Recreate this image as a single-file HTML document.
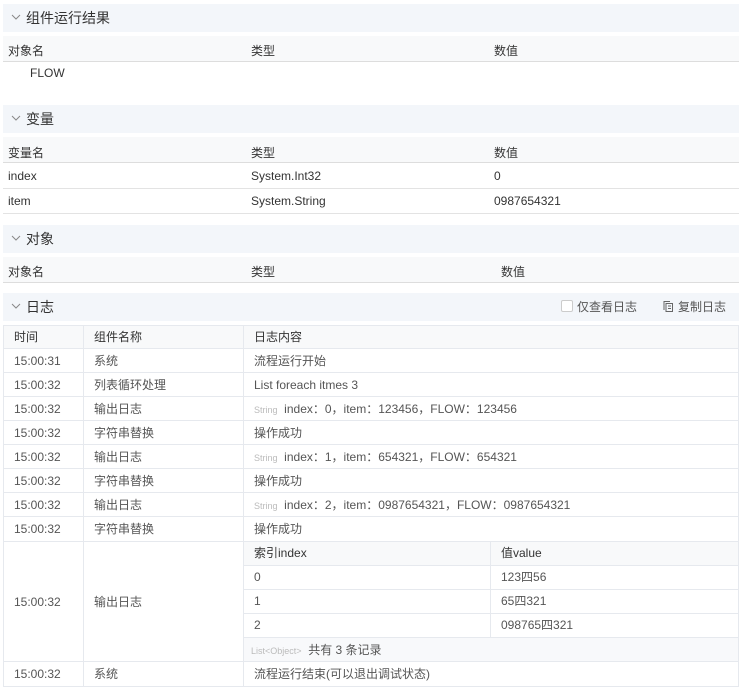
<!DOCTYPE html><html><head><meta charset="utf-8"><style>
*{margin:0;padding:0;box-sizing:border-box}
body{width:743px;height:692px;background:#fff;font-family:"Liberation Sans","Noto Sans CJK SC",sans-serif;font-size:12px;color:#333;position:relative;overflow:hidden}
.a{position:absolute;white-space:nowrap}
.hd{position:absolute;left:3px;width:736px;height:28px;background:#f3f6fa;font-size:14px;line-height:28px;padding-left:23px}
.hd svg{position:absolute;left:8px;top:10px}
.th{position:absolute;left:3px;width:736px;height:26px;background:#f8f9fa;border-bottom:1px solid #ddd}
.row{position:absolute;left:3px;width:736px;border-bottom:1px solid #e3e3e3}
.t{position:absolute;color:#555;line-height:24px}
.g{color:#555}
.s{font-size:9px;color:#bbb}
</style></head><body>
<div class="hd" style="top:4px"><svg width="10" height="7"><path d="M1 1l4 4 4-4" stroke="#888" fill="none"/></svg>组件运行结果</div>
<div class="th" style="top:36px"></div>
<div class="a" style="left:8px;top:42px">对象名</div><div class="a" style="left:251px;top:42px">类型</div><div class="a" style="left:494px;top:42px">数值</div>
<div class="a" style="left:30px;top:66px">FLOW</div>

<div class="hd" style="top:105px"><svg width="10" height="7"><path d="M1 1l4 4 4-4" stroke="#888" fill="none"/></svg>变量</div>
<div class="th" style="top:137px"></div>
<div class="a" style="left:8px;top:144px">变量名</div><div class="a" style="left:251px;top:144px">类型</div><div class="a" style="left:494px;top:144px">数值</div>
<div class="row" style="top:163px;height:26px"></div><div class="row" style="top:188px;height:26px"></div>
<div class="a" style="left:8px;top:169px">index</div><div class="a" style="left:251px;top:169px">System.Int32</div><div class="a" style="left:494px;top:169px">0</div>
<div class="a" style="left:8px;top:194px">item</div><div class="a" style="left:251px;top:194px">System.String</div><div class="a" style="left:494px;top:194px">0987654321</div>

<div class="hd" style="top:225px"><svg width="10" height="7"><path d="M1 1l4 4 4-4" stroke="#888" fill="none"/></svg>对象</div>
<div class="th" style="top:257px"></div>
<div class="a" style="left:8px;top:263px">对象名</div><div class="a" style="left:251px;top:263px">类型</div><div class="a" style="left:501px;top:263px">数值</div>

<div class="hd" style="top:293px"><svg width="10" height="7"><path d="M1 1l4 4 4-4" stroke="#888" fill="none"/></svg>日志
<span class="a" style="left:558px;top:7px;width:12px;height:12px;border:1px solid #ccc;border-radius:2px;background:#fff"></span>
<span class="a g" style="left:574px;top:0;font-size:12px">仅查看日志</span>
<svg class="a" style="left:660px;top:8px" width="11" height="12"><path d="M3 2.5h6.5v8H3zM1 9V.5h6" stroke="#666" fill="none"/><path d="M5 5h3M5 7.5h3" stroke="#666"/></svg>
<span class="a g" style="left:675px;top:0;font-size:12px">复制日志</span></div>

<div class="a" style="left:3px;top:325px;width:736px;height:362px;border:1px solid #e6e9ee"></div>
<div class="a" style="left:4px;top:326px;width:734px;height:23px;background:#f8f9fa"></div>
<div class="a" style="left:83px;top:325px;width:1px;height:362px;background:#e6e9ee"></div>
<div class="a" style="left:243px;top:325px;width:1px;height:362px;background:#e6e9ee"></div>
<div class="t" style="left:14px;top:325px;color:#333">时间</div><div class="t" style="left:94px;top:325px;color:#333">组件名称</div><div class="t" style="left:254px;top:325px;color:#333">日志内容</div>
<div id="rows"></div>
<script>
var r=[["15:00:31","系统","流程运行开始"],["15:00:32","列表循环处理","List foreach itmes 3"],["15:00:32","输出日志","<span class='s'>String</span>&nbsp; index：0，item：123456，FLOW：123456"],["15:00:32","字符串替换","操作成功"],["15:00:32","输出日志","<span class='s'>String</span>&nbsp; index：1，item：654321，FLOW：654321"],["15:00:32","字符串替换","操作成功"],["15:00:32","输出日志","<span class='s'>String</span>&nbsp; index：2，item：0987654321，FLOW：0987654321"],["15:00:32","字符串替换","操作成功"]];
var h="";for(var i=0;i<r.length;i++){var y=349+i*24;h+="<div class='a' style='left:4px;top:"+(y-1)+"px;width:734px;height:1px;background:#e6e9ee'></div><div class='t' style='left:14px;top:"+y+"px'>"+r[i][0]+"</div><div class='t' style='left:94px;top:"+y+"px'>"+r[i][1]+"</div><div class='t' style='left:254px;top:"+y+"px'>"+r[i][2]+"</div>";}
document.getElementById("rows").innerHTML=h;
</script>
<div class="a" style="left:4px;top:541px;width:734px;height:1px;background:#e6e9ee"></div>
<div class="a" style="left:244px;top:542px;width:494px;height:23px;background:#f8f9fa"></div>
<div class="a" style="left:244px;top:565px;width:494px;height:1px;background:#e6e9ee"></div>
<div class="a" style="left:244px;top:589px;width:494px;height:1px;background:#e6e9ee"></div>
<div class="a" style="left:244px;top:613px;width:494px;height:1px;background:#e6e9ee"></div>
<div class="a" style="left:244px;top:637px;width:494px;height:1px;background:#e6e9ee"></div>
<div class="a" style="left:244px;top:638px;width:494px;height:23px;background:#f8f9fb"></div>
<div class="a" style="left:490px;top:541px;width:1px;height:96px;background:#e6e9ee"></div>
<div class="t" style="left:254px;top:541px;color:#333">索引index</div><div class="t" style="left:501px;top:541px;color:#333">值value</div>
<div class="t" style="left:254px;top:565px">0</div><div class="t" style="left:501px;top:565px">123四56</div>
<div class="t" style="left:254px;top:589px">1</div><div class="t" style="left:501px;top:589px">65四321</div>
<div class="t" style="left:254px;top:613px">2</div><div class="t" style="left:501px;top:613px">098765四321</div>
<div class="t" style="left:251px;top:638px"><span class="s">List&lt;Object&gt;</span>&nbsp; 共有 3 条记录</div>
<div class="t" style="left:14px;top:590px">15:00:32</div><div class="t" style="left:94px;top:590px">输出日志</div>
<div class="a" style="left:4px;top:661px;width:734px;height:1px;background:#e6e9ee"></div>
<div class="t" style="left:14px;top:662px">15:00:32</div><div class="t" style="left:94px;top:662px">系统</div><div class="t" style="left:254px;top:662px">流程运行结束(可以退出调试状态)</div>
</body></html>
